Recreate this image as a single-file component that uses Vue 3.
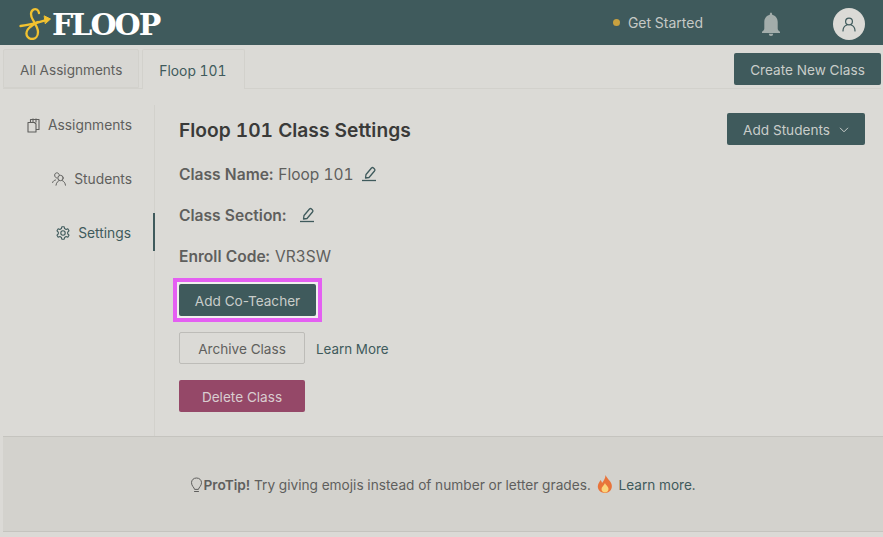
<script setup>
const navItems = [
  { label: 'Assignments', icon: 'assign' },
  { label: 'Students', icon: 'students' },
  { label: 'Settings', icon: 'settings', active: true }
]
</script>

<template>
  <div class="page">
    <header class="topbar">
      <div class="logo">
        <svg class="logo-mark" width="34" height="34" viewBox="0 0 34 34" fill="none" stroke="#f2c230" stroke-width="2.300" stroke-linecap="round" stroke-linejoin="round">
          <path d="M2.500 20C10 19 20 16.500 29 13.800" />
          <path d="M26.500 10L32.500 13L27.500 17.500Z" fill="#f2c230" stroke-width="1" />
          <path d="M21 7C20.500 3.500 17.500 2.500 15.500 3.500C12 5.500 12.500 10 15 14C17 17.500 20 22 20 26C20 30 17.500 33 14 33C10.500 33 8 30 8.500 26.500C9 22 14 19.500 20 16" />
        </svg>
        <span class="logo-text">FLOOP</span>
      </div>
      <div class="top-right">
        <div class="get-started"><span class="dot"></span>Get Started</div>
        <svg class="bell" width="18" height="24" viewBox="0 0 18 24" fill="#a3adab">
          <path d="M7.800 2.700C7.800 1.500 8.300.5 9 .5S10.200 1.500 10.200 2.700C13.800 3.500 15.700 6.500 15.700 10V16.500C15.700 17.800 16.500 18.800 18 19.700V21H0V19.700C1.500 18.800 2.300 17.800 2.300 16.500V10C2.300 6.500 4.200 3.500 7.800 2.700Z" />
          <path d="M6.800 21.800h4.400a2.200 2.200 0 0 1-4.400 0Z" />
        </svg>
        <div class="avatar">
          <svg width="14" height="15" viewBox="0 0 14 15" fill="none" stroke="#3f5a5c" stroke-width="1.200" stroke-linecap="round">
            <circle cx="7" cy="4.500" r="3.400" />
            <path d="M1 14c0-3.200 1.800-5.200 3.800-6M13 14c0-3.200-1.800-5.200-3.800-6" />
          </svg>
        </div>
      </div>
    </header>

    <div class="tabbar">
      <div class="tabs">
        <div class="tab">All Assignments</div>
        <div class="tab active">Floop 101</div>
      </div>
      <button class="btn primary create">Create New Class</button>
    </div>

    <div class="body">
      <nav class="side">
        <div v-for="item in navItems" :key="item.label" class="nav-item" :class="{ active: item.active }">
          <svg v-if="item.icon === 'assign'" width="13" height="15" viewBox="0 0 13 15" fill="none" stroke="currentColor" stroke-width="1.100" stroke-linejoin="round">
            <path d="M1 4.500h6.500L9 6v8H1z" />
            <path d="M3.500 4.500V1.500h8.500v10H9M6 .5v4M9 .5v4" />
          </svg>
          <svg v-else-if="item.icon === 'students'" width="14" height="14" viewBox="0 0 14 14" fill="none" stroke="currentColor" stroke-width="1" stroke-linecap="round">
            <circle cx="8.500" cy="6" r="2.700" />
            <path d="M4 13.200c.3-2.500 1.800-4 3-4.500M13.500 13.200c-.3-2.500-1.800-4-3-4.500M3.500 8C2.300 8.300 1 9 .6 10.500M7.200 2.500C6.700 1.200 5.500.6 4.400.9C3 1.200 2.400 2.500 2.800 4C3.100 5.100 3.800 5.800 4.800 6" />
          </svg>
          <svg v-else width="14" height="14" viewBox="0 0 14 14" fill="none" stroke="currentColor" stroke-width="1.100" stroke-linejoin="round">
            <circle cx="7" cy="7" r="2.200" />
            <path d="M5.800 .8h2.400l.4 1.800 1.500.8 1.700-.6 1.200 2-1.300 1.300v1.800l1.300 1.300-1.200 2-1.700-.6-1.500.8-.4 1.800H5.800l-.4-1.800-1.500-.8-1.700.6-1.200-2 1.300-1.300V6.100L1 4.800l1.200-2 1.700.6 1.500-.8z" />
          </svg>
          <span>{{ item.label }}</span>
        </div>
      </nav>

      <main class="content">
        <div class="title-row">
          <h1>Floop 101 Class Settings</h1>
          <button class="btn primary add-students">
            Add Students
            <svg width="10" height="6" viewBox="0 0 10 6" fill="none" stroke="currentColor" stroke-width="1">
              <path d="M1 .8l4 4 4-4" />
            </svg>
          </button>
        </div>
        <div class="field">
          <b>Class Name:</b> Floop 101
          <svg class="pen" width="16" height="16" viewBox="0 0 16 16" fill="none" stroke="#3f5a5c" stroke-width="1.300" stroke-linejoin="round">
            <path d="M4.500 12L5 8.500L10.500 2Q11.500 1 12.500 2L13.500 3Q14.500 4 13.500 5L8 11.500Z" />
            <path d="M1 14.500h14" stroke-width="1.300" />
          </svg>
        </div>
        <div class="field">
          <b>Class Section:</b>
          <svg class="pen wide" width="16" height="16" viewBox="0 0 16 16" fill="none" stroke="#3f5a5c" stroke-width="1.300" stroke-linejoin="round">
            <path d="M4.500 12L5 8.500L10.500 2Q11.500 1 12.500 2L13.500 3Q14.500 4 13.500 5L8 11.500Z" />
            <path d="M1 14.500h14" stroke-width="1.300" />
          </svg>
        </div>
        <div class="field"><b>Enroll Code:</b> VR3SW</div>
        <div class="highlight">
          <button class="btn primary co">Add Co-Teacher</button>
        </div>
        <div class="archive-row">
          <button class="btn outline">Archive Class</button>
          <a class="link">Learn More</a>
        </div>
        <button class="btn danger">Delete Class</button>
      </main>
    </div>

    <footer class="tip">
      <svg class="bulb" width="13" height="16" viewBox="0 0 13 16" fill="none" stroke="#5f5f5d" stroke-width="1" stroke-linecap="round">
        <path d="M4.500 12C4.300 10.500 1.500 9 1.500 5.700C1.500 3 3.600 1 6.500 1S11.500 3 11.500 5.700C11.500 9 8.700 10.500 8.500 12Z" />
        <path d="M4.500 14.500h4" />
      </svg>
      <span><b>ProTip!</b> Try giving emojis instead of number or letter grades.</span>
      <svg class="flame" width="16" height="18" viewBox="0 0 16 18">
        <path d="M8.500 0C9.500 3 13 5 14.500 9C16 13.500 13 18 8 18S0 14 1 10C1.500 7.800 3 6.500 3.500 5C4.500 6 4.800 7 5 8C6.500 6 8.500 3.500 8.500 0Z" fill="#e8743a" />
        <path d="M8 8C8.500 10 11.500 11.500 11.500 14C11.500 16.200 10 17.500 8 17.500S4.500 16.200 4.500 14C4.500 12 7 10.500 8 8Z" fill="#fbd47a" />
      </svg>
      <a class="link">Learn more.</a>
    </footer>
  </div>
</template>

<style>
html, body { margin: 0; background: #dbdad6; }
</style>

<style scoped>
.page {
  width: 883px;
  height: 537px;
  overflow: hidden;
  background: #dbdad6;
  font-family: Inter, "Liberation Sans", sans-serif;
  font-size: 13.6px;
  font-variant-numeric: tabular-nums;
  color: #5f5f5d;
  box-sizing: border-box;
}
.topbar {
  height: 45px;
  background: #3f5a5c;
  display: flex;
  align-items: center;
  justify-content: space-between;
}
.logo {
  display: flex;
  align-items: center;
  margin-left: 18px;
}
.logo-mark { margin-top: 1px; }
.logo-text {
  font-family: "DejaVu Serif", serif;
  font-weight: 700;
  font-size: 30px;
  letter-spacing: -2px;
  color: #fff;
  line-height: 1;
  margin-top: 4px;
}
.top-right {
  display: flex;
  align-items: center;
  margin-right: 18px;
}
.get-started {
  display: flex;
  align-items: center;
  color: #c5c9c6;
  font-size: 14px;
  margin-right: 59px;
  line-height: 1;
}
.dot {
  width: 7px;
  height: 7px;
  border-radius: 50%;
  background: #c9a13f;
  margin-right: 8px;
}
.bell { margin-right: 53px; margin-top: 3px; }
.avatar {
  width: 32px;
  height: 32px;
  margin-top: 3px;
  border-radius: 50%;
  background: #dbdad6;
  display: flex;
  align-items: center;
  justify-content: center;
}
.tabbar {
  height: 44px;
  box-sizing: border-box;
  display: flex;
  justify-content: space-between;
  margin-left: 3px;
  margin-right: 2px;
  border-bottom: 1px solid #d2d1cc;
}
.tabs {
  display: flex;
  gap: 3px;
  padding-top: 4px;
}
.tab {
  height: 39px;
  box-sizing: border-box;
  padding: 2px 16px 0;
  display: flex;
  align-items: center;
  background: #d8d7d3;
  border: 1px solid #d2d1cc;
  border-radius: 2px 2px 0 0;
}
.tab.active {
  height: 40px;
  padding-right: 18px;
  font-size: 13.800px;
  background: #dbdad6;
  color: #3f5a5c;
  border-bottom: 0;
}
.btn {
  font-family: inherit;
  font-size: 13.6px;
  box-sizing: border-box;
  height: 32px;
  border: 0;
  border-radius: 2px;
  padding: 2px 0 0;
  display: flex;
  align-items: center;
  justify-content: center;
}
.primary { background: #3f5a5c; color: #c9cdca; }
.create { width: 147px; margin-top: 8px; }
.body {
  display: flex;
  height: 331px;
  margin-top: 16px;
}
.side {
  width: 155px;
  height: 331px;
  box-sizing: border-box;
  border-right: 1px solid #d2d1cc;
  font-size: 13.8px;
}
.nav-item {
  height: 54px;
  box-sizing: border-box;
  display: flex;
  align-items: center;
  justify-content: flex-end;
  gap: 8px;
  padding: 2px 23px 16px 0;
  margin-right: -1px;
}
.nav-item.active {
  color: #3f5a5c;
  height: 38px;
  padding-bottom: 0;
  padding-right: 22px;
  border-right: 2px solid #3f5a5c;
}
.content {
  flex: 1;
  padding: 8px 18px 0 24px;
}
.title-row {
  display: flex;
  justify-content: space-between;
  align-items: center;
  height: 32px;
  margin-bottom: 19px;
}
h1 {
  margin: 2px 0 0;
  font-size: 19.2px;
  font-weight: 600;
  color: #3a3a39;
}
.add-students {
  width: 138px;
  gap: 9px;
}
.field {
  font-size: 15.500px;
  height: 41px;
  line-height: 22px;
  display: flex;
  align-items: flex-start;
  gap: 1px;
  white-space: pre;
}
.field b { font-weight: 600; font-size: 15.600px; }
.pen { margin: 2px 0 0 2px; }
.pen.wide { margin-left: 12px; }
.highlight {
  width: 149px;
  height: 44px;
  box-sizing: border-box;
  border: 4px solid #e45ff2;
  margin: -9px 0 10px -6px;
  padding: 2px;
  background: #f0f0ee;
}
.co { width: 137px; height: 32px; }
.archive-row {
  display: flex;
  align-items: center;
  gap: 11px;
  margin-bottom: 16px;
}
.outline {
  width: 126px;
  background: transparent;
  border: 1px solid #bdbcb8;
  color: #5f5f5d;
}
.link { color: #3f5a5c; }
.archive-row .link { margin-top: 2px; font-size: 13.400px; }
.danger {
  width: 126px;
  background: #954868;
  color: #d9cdd0;
}
.tip {
  margin-left: 3px;
  height: 96px;
  box-sizing: border-box;
  background: #d3d2cd;
  border-top: 1px solid #c5c4bf;
  border-bottom: 1px solid #c5c4bf;
  padding-top: 2px;
  display: flex;
  align-items: center;
  justify-content: center;
}
.tip b { font-weight: 600; }
.tip span { font-size: 13.700px; }
.flame { margin: -2px 6px 0 6px; }
.bulb { margin-top: -1px; }
</style>
